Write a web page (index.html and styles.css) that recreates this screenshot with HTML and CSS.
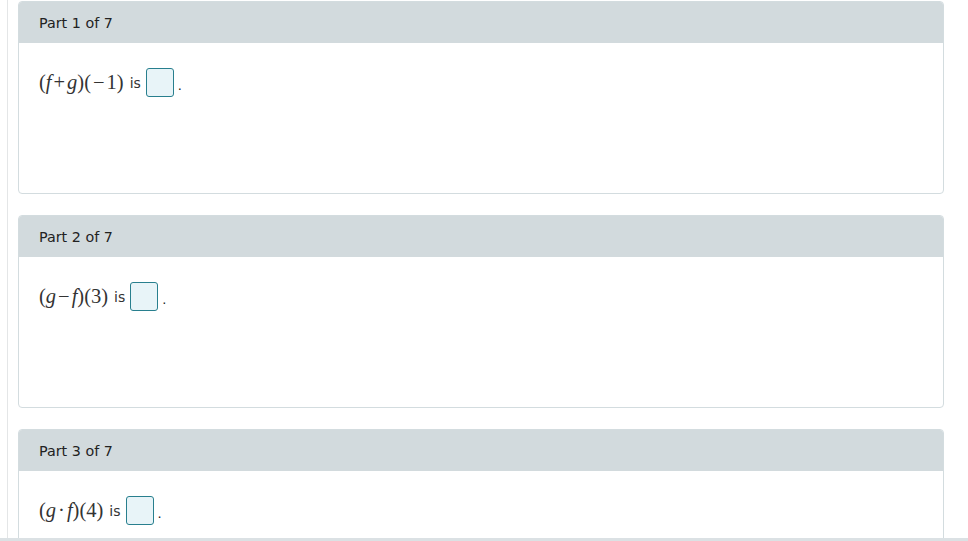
FILE: index.html
```html
<!DOCTYPE html>
<html>
<head>
<meta charset="utf-8">
<link rel="stylesheet" href="styles.css">
</head>
<body>
<div class="page">
  <div class="card">
    <div class="card-head">Part 1 of 7</div>
    <div class="card-body">
      <div class="q">
        <span class="math"><span class="p">(</span><i>f</i><span class="op">+</span><i>g</i><span class="p">)</span><span class="p">(</span><span class="op">−</span>1<span class="p">)</span></span>
        <span class="is">is</span>
        <span class="box"></span><span class="dot">.</span>
      </div>
    </div>
  </div>
  <div class="card">
    <div class="card-head">Part 2 of 7</div>
    <div class="card-body">
      <div class="q">
        <span class="math"><span class="p">(</span><i>g</i><span class="op">−</span><i>f</i><span class="p">)</span><span class="p">(</span>3<span class="p">)</span></span>
        <span class="is">is</span>
        <span class="box"></span><span class="dot">.</span>
      </div>
    </div>
  </div>
  <div class="card">
    <div class="card-head">Part 3 of 7</div>
    <div class="card-body">
      <div class="q">
        <span class="math"><span class="p">(</span><i>g</i><span class="cdot">·</span><i>f</i><span class="p">)</span><span class="p">(</span>4<span class="p">)</span></span>
        <span class="is">is</span>
        <span class="box"></span><span class="dot">.</span>
      </div>
    </div>
  </div>
</div>
<div class="hbar"></div>
</body>
</html>
```
FILE: styles.css
```css
html, body {
  margin: 0;
  padding: 0;
  background: #ffffff;
  overflow: hidden;
}
body {
  font-family: "DejaVu Sans", Verdana, sans-serif;
  color: #222222;
}
.page {
  margin-left: 7px;
  border-left: 1px solid #e4e6e7;
  padding: 1px 0 0 10px;
  min-height: 541px;
  box-sizing: border-box;
  display: flex;
  flex-direction: column;
  gap: 21px;
}
.card {
  width: 926px;
  height: 193px;
  box-sizing: border-box;
  border: 1px solid #d3dcdf;
  border-radius: 4px;
  overflow: hidden;
  display: flex;
  flex-direction: column;
  flex-shrink: 0;
}
.card-head {
  background: #d2dadd;
  height: 41px;
  margin: -1px -1px 0 -1px;
  padding: 1px 20px 0 21px;
  display: flex;
  align-items: center;
  font-size: 14.3px;
  color: #222222;
}
.card-body {
  padding: 24px 20px;
}
.q {
  display: flex;
  align-items: center;
  height: 30px;
}
.math {
  font-family: "Liberation Serif", "Times New Roman", serif;
  font-size: 20.5px;
  color: #333333;
  white-space: nowrap;
}
.math i {
  font-style: italic;
}
.math .op {
  margin: 0 2px;
}
.math .cdot {
  margin: 0 2px;
}
.is {
  font-size: 14px;
  margin-left: 6px;
  margin-right: 5px;
  color: #333333;
  position: relative;
  top: 1px;
}
.box {
  width: 26px;
  height: 27px;
  border: 1px solid #287f8e;
  border-radius: 3px;
  background: #e8f4f8;
  display: inline-block;
}
.dot {
  font-size: 13px;
  margin-left: 4px;
  position: relative;
  top: 3px;
}
.hbar {
  position: fixed;
  left: 0;
  right: 0;
  bottom: 0;
  height: 3px;
  background: #dbe1e4;
}
```
